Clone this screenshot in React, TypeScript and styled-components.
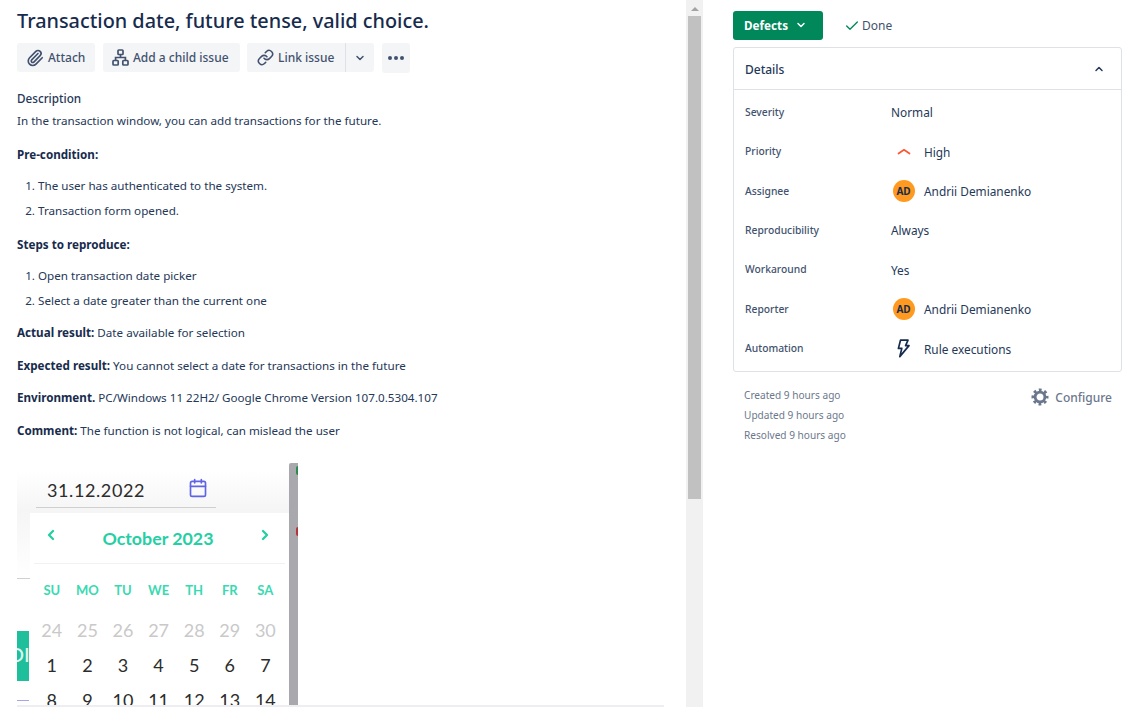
import styled, { createGlobalStyle } from "styled-components";
import { Calendar, Check, ChevronDown, ChevronLeft, ChevronRight, ChevronUp, Link, Paperclip } from "lucide-react";

const GlobalStyle = createGlobalStyle`
  html, body {
    margin: 0;
    padding: 0;
    background: #fff;
  }
  * {
    box-sizing: border-box;
  }
`;

const ink = "#172b4d";
const text = "#253858";
const muted = "#42526e";

const Page = styled.div`
  width: 1136px;
  height: 707px;
  display: flex;
  overflow: hidden;
  position: relative;
  font-family: "Noto Sans", "Open Sans", sans-serif;
  color: ${text};
`;

const Main = styled.main`
  width: 686px;
  height: 707px;
  overflow: hidden;
  padding: 8px 0 0 17px;
  flex-shrink: 0;
`;

const Title = styled.h1`
  margin: 0;
  font-size: 19.85px;
  line-height: 26px;
  font-weight: 500;
  color: ${ink};
`;

const Toolbar = styled.div`
  display: flex;
  align-items: flex-start;
  gap: 8px;
  margin-top: 9px;
`;

const ToolButton = styled.button<{ $width: number }>`
  width: ${(p) => p.$width}px;
  height: 29px;
  padding: 0 0 0 9px;
  border: 0;
  border-radius: 3px;
  background: #f4f5f7;
  display: flex;
  align-items: center;
  gap: 4px;
  font: 500 12px "Noto Sans", sans-serif;
  color: ${muted};
`;

const SplitButton = styled.div`
  display: flex;
  border-radius: 3px;
  overflow: hidden;
  background: #f4f5f7;
  margin-left: -1px;
`;

const SplitMain = styled(ToolButton)`
  border-right: 1px solid #dfe1e6;
  border-radius: 0;
  padding-left: 10px;
`;

const SplitArrow = styled.span`
  width: 28px;
  height: 29px;
  display: flex;
  align-items: center;
  justify-content: center;
  color: ${muted};
`;

const MoreButton = styled.span`
  width: 28px;
  height: 30px;
  border-radius: 3px;
  background: #f4f5f7;
  display: flex;
  align-items: center;
  justify-content: center;
  gap: 2px;
`;

const MoreDot = styled.i`
  width: 4px;
  height: 4px;
  border-radius: 50%;
  background: ${muted};
`;

const Heading = styled.div`
  margin-top: 15px;
  font-size: 11.7px;
  line-height: 20px;
  font-weight: 500;
  color: ${text};
`;

const Paragraph = styled.p`
  margin: 11.5px 0 0;
  font-size: 11.65px;
  line-height: 21px;
  color: ${text};

  strong {
    font-weight: 700;
    color: ${ink};
  }
`;

const Lead = styled(Paragraph)`
  margin-top: 2px;
`;

const ListTitle = styled(Paragraph)`
  margin-top: 12.7px;
`;

const Numbered = styled.ol`
  margin: 10.3px 0 0;
  padding: 0 0 0 21px;
  font-size: 11.65px;
  line-height: 21px;

  li + li {
    margin-top: 4px;
  }
`;

const Shot = styled.figure`
  position: relative;
  width: 281px;
  height: 244px;
  margin: 22px 0 0;
  overflow: hidden;
  font-family: Lato, "Noto Sans", sans-serif;
  background: linear-gradient(#ffffff 0, #ffffff 8px, #f5f5f5 48px, #ffffff 115px);
`;

const ShotRule = styled.div`
  position: absolute;
  left: 0;
  top: 115px;
  width: 14px;
  height: 1px;
  background: #d0d0d0;
`;

const ShotAction = styled.div`
  position: absolute;
  left: 0;
  top: 168px;
  width: 12px;
  height: 50px;
  background: #20bf9b;
  color: #dff6f0;
  font: 500 20px Lato, sans-serif;
  line-height: 46px;
  white-space: nowrap;
  overflow: hidden;
  text-indent: -9px;
`;

const ShotUnderline = styled.div`
  position: absolute;
  left: 0;
  top: 237px;
  width: 12px;
  height: 1px;
  background: #a4a6e6;
`;

const ShotSidebar = styled.div`
  position: absolute;
  right: 0;
  top: 0;
  bottom: 0;
  width: 9px;
  border-top-left-radius: 2px;
  background: #a9a9ad;
`;

const ShotDot = styled.span<{ $top: number; $color: string }>`
  position: absolute;
  left: 279px;
  top: ${(p) => p.$top}px;
  width: 4px;
  height: 9px;
  border-radius: 4px;
  background: ${(p) => p.$color};
`;

const DateField = styled.div`
  position: absolute;
  left: 19px;
  top: 11px;
  width: 180px;
  height: 34px;
  padding: 0 0 1px 11px;
  border-bottom: 1px solid #cfcfcf;
  display: flex;
  align-items: center;
  justify-content: space-between;
  font-size: 18px;
  letter-spacing: 0.6px;
  color: #2c2c2c;

  svg {
    margin-right: 8px;
    margin-top: -4px;
  }
`;

const Popup = styled.div`
  position: absolute;
  left: 13px;
  top: 50px;
  width: 259px;
  height: 200px;
  background: #fff;
`;

const MonthBar = styled.div`
  height: 51px;
  margin: 0 4px;
  border-bottom: 1px solid #f1f1f1;
  padding: 0 12px 0 9px;
  display: flex;
  justify-content: space-between;
  color: #25cfa4;

  svg {
    margin-top: 14px;
  }
`;

const Month = styled.span`
  font-size: 17.8px;
  font-weight: 700;
  line-height: 50px;
`;

const DayGrid = styled.div`
  display: grid;
  grid-template-columns: repeat(7, 35.6px);
  padding: 16px 0 0 4px;
  text-align: center;
`;

const WeekDay = styled.span`
  font-size: 13px;
  font-weight: 700;
  line-height: 20px;
  margin-bottom: 13px;
  color: #3ad9b1;
`;

const Day = styled.span<{ $dim?: boolean }>`
  font-size: 18px;
  line-height: 35px;
  color: ${(p) => (p.$dim ? "#c9c9c9" : "#2c2c2c")};
`;

const ScrollTrack = styled.div`
  width: 17px;
  height: 707px;
  background: #f1f1f1;
  padding: 16px 2px 0;
  position: relative;
  flex-shrink: 0;
`;

const ScrollThumb = styled.div`
  height: 483px;
  background: #c1c1c1;
`;

const ScrollArrow = styled.span`
  position: absolute;
  left: 5px;
  top: 7px;
  border-left: 4px solid transparent;
  border-right: 4px solid transparent;
  border-bottom: 4px solid #a3a3a3;
`;

const BottomRule = styled.div`
  position: absolute;
  left: 17px;
  bottom: 0;
  width: 647px;
  height: 2px;
  background: #eeeef2;
`;

const Side = styled.aside`
  width: 433px;
  padding: 11px 0 0 30px;
  flex-shrink: 0;
`;

const StatusRow = styled.div`
  display: flex;
  align-items: center;
  height: 29px;
`;

const StatusButton = styled.button`
  width: 90px;
  height: 29px;
  padding: 0 0 2px 11px;
  border: 0;
  border-radius: 3px;
  background: #00875a;
  color: #fff;
  display: flex;
  align-items: center;
  gap: 7px;
  font: 700 11.7px "Noto Sans", sans-serif;
`;

const DoneFlag = styled.span`
  display: flex;
  align-items: center;
  gap: 2px;
  margin-left: 21px;
  font-size: 12px;
  color: ${muted};
`;

const Panel = styled.section`
  width: 389px;
  height: 325px;
  margin-top: 7px;
  border: 1px solid #dfe1e6;
  border-radius: 3px;
`;

const PanelHead = styled.header`
  height: 42px;
  padding: 1px 16px 0 11px;
  border-bottom: 1px solid #dfe1e6;
  display: flex;
  align-items: center;
  justify-content: space-between;
  font-size: 12px;
  font-weight: 500;
  color: ${text};
`;

const FieldList = styled.div`
  padding-top: 2.6px;
`;

const Field = styled.div`
  display: grid;
  grid-template-columns: 146px 1fr;
  height: 39.4px;
  padding-left: 11px;
  align-items: center;
`;

const FieldLabel = styled.span`
  font-size: 10.3px;
  font-weight: 500;
  margin-top: -1px;
  color: ${muted};
`;

const FieldValue = styled.span`
  display: flex;
  align-items: center;
  font-size: 11.85px;
  color: ${text};
`;

const ValueIcon = styled.span`
  width: 33px;
  display: flex;
  justify-content: center;
  padding-right: 8px;
`;

const Avatar = styled.span`
  width: 22px;
  height: 22px;
  border-radius: 50%;
  background: #ff991f;
  color: #172b4d;
  display: flex;
  align-items: center;
  justify-content: center;
  font-size: 10px;
  font-weight: 700;
`;

const Footer = styled.footer`
  display: flex;
  justify-content: space-between;
  padding: 13px 10px 0 11px;
  width: 389px;
`;

const Stamps = styled.div`
  font-size: 10.1px;
  line-height: 20px;
  color: #6b778c;
`;

const Configure = styled.span`
  display: flex;
  align-items: center;
  gap: 6px;
  margin-top: 2px;
  height: 20px;
  font-size: 12px;
  font-weight: 500;
  color: #6b778c;
`;

const priorityIcon = (
  <svg width="14" height="8" viewBox="0 0 14 8" fill="none">
    <path d="M1.5 5.5 L7 1.8 L12.5 5.5" stroke="#ff5630" strokeWidth="1.7" strokeLinecap="round" strokeLinejoin="round" />
  </svg>
);

const ChildIssueIcon = () => (
  <svg width="17" height="17" viewBox="0 0 17 17" fill="none" stroke="currentColor" strokeWidth="1.7">
    <rect x="6" y="1" width="5" height="4.5" rx="0.8" />
    <rect x="1" y="11.5" width="5.2" height="4.5" rx="0.8" />
    <rect x="10.8" y="11.5" width="5.2" height="4.5" rx="0.8" />
    <path d="M8.5 5.5 V8.5 M3.6 11.5 V8.5 H13.4 V11.5" />
  </svg>
);

const BoltIcon = () => (
  <svg width="13" height="19" viewBox="0 0 13 19" fill="none" stroke={ink} strokeWidth="1.7" strokeLinejoin="round">
    <path d="M3.5 1.2 H11 L8.6 6.6 H12 L2.8 17.6 L4.8 9.4 H1.4 Z" />
  </svg>
);

const GearIcon = () => (
  <svg width="18" height="18" viewBox="0 0 18 18" fill="none" stroke="currentColor">
    <circle cx="9" cy="9" r="4.9" strokeWidth="2.8" />
    <circle cx="9" cy="9" r="7" strokeWidth="3" strokeDasharray="2.75 2.75" strokeDashoffset="1.37" />
  </svg>
);

const weekDays = ["SU", "MO", "TU", "WE", "TH", "FR", "SA"];
const lastMonth = [24, 25, 26, 27, 28, 29, 30];
const thisMonth = [1, 2, 3, 4, 5, 6, 7, 8, 9, 10, 11, 12, 13, 14];

const App = () => {
  return (
    <>
      <GlobalStyle />
      <Page>
        <Main>
          <Title>Transaction date, future tense, valid choice.</Title>
          <Toolbar>
            <ToolButton $width={78}>
              <Paperclip size={18} strokeWidth={2.2} />
              Attach
            </ToolButton>
            <ToolButton $width={137}>
              <ChildIssueIcon />
              Add a child issue
            </ToolButton>
            <SplitButton>
              <SplitMain $width={99}>
                <Link size={17} strokeWidth={2.2} />
                Link issue
              </SplitMain>
              <SplitArrow>
                <ChevronDown size={12} strokeWidth={3} />
              </SplitArrow>
            </SplitButton>
            <MoreButton>
              <MoreDot />
              <MoreDot />
              <MoreDot />
            </MoreButton>
          </Toolbar>
          <Heading>Description</Heading>
          <Lead>In the transaction window, you can add transactions for the future.</Lead>
          <ListTitle>
            <strong>Pre-condition:</strong>
          </ListTitle>
          <Numbered>
            <li>The user has authenticated to the system.</li>
            <li>Transaction form opened.</li>
          </Numbered>
          <ListTitle>
            <strong>Steps to reproduce:</strong>
          </ListTitle>
          <Numbered>
            <li>Open transaction date picker</li>
            <li>Select a date greater than the current one</li>
          </Numbered>
          <Paragraph>
            <strong>Actual result:</strong> Date available for selection
          </Paragraph>
          <Paragraph>
            <strong>Expected result:</strong> You cannot select a date for transactions in the future
          </Paragraph>
          <Paragraph>
            <strong>Environment.</strong> PC/Windows 11 22H2/ Google Chrome Version 107.0.5304.107
          </Paragraph>
          <Paragraph>
            <strong>Comment:</strong> The function is not logical, can mislead the user
          </Paragraph>
          <Shot>
            <ShotRule />
            <ShotAction>OI</ShotAction>
            <ShotUnderline />
            <ShotSidebar />
            <ShotDot $top={3} $color="#2d8a4e" />
            <ShotDot $top={64} $color="#b5343a" />
            <DateField>
              31.12.2022
              <Calendar size={20} color="#5f63e6" strokeWidth={2} />
            </DateField>
            <Popup>
              <MonthBar>
                <ChevronLeft size={16} strokeWidth={3.5} />
                <Month>October 2023</Month>
                <ChevronRight size={16} strokeWidth={3.5} />
              </MonthBar>
              <DayGrid>
                {weekDays.map((d) => (
                  <WeekDay key={d}>{d}</WeekDay>
                ))}
                {lastMonth.map((d) => (
                  <Day key={`p${d}`} $dim>
                    {d}
                  </Day>
                ))}
                {thisMonth.map((d) => (
                  <Day key={d}>{d}</Day>
                ))}
              </DayGrid>
            </Popup>
          </Shot>
        </Main>
        <ScrollTrack>
          <ScrollArrow />
          <ScrollThumb />
        </ScrollTrack>
        <Side>
          <StatusRow>
            <StatusButton>
              Defects
              <ChevronDown size={12} strokeWidth={3} />
            </StatusButton>
            <DoneFlag>
              <Check size={16} color="#00875a" strokeWidth={2} />
              Done
            </DoneFlag>
          </StatusRow>
          <Panel>
            <PanelHead>
              Details
              <ChevronUp size={12} strokeWidth={3} />
            </PanelHead>
            <FieldList>
              <Field>
                <FieldLabel>Severity</FieldLabel>
                <FieldValue>Normal</FieldValue>
              </Field>
              <Field>
                <FieldLabel>Priority</FieldLabel>
                <FieldValue>
                  <ValueIcon>{priorityIcon}</ValueIcon>
                  High
                </FieldValue>
              </Field>
              <Field>
                <FieldLabel>Assignee</FieldLabel>
                <FieldValue>
                  <ValueIcon>
                    <Avatar>AD</Avatar>
                  </ValueIcon>
                  Andrii Demianenko
                </FieldValue>
              </Field>
              <Field>
                <FieldLabel>Reproducibility</FieldLabel>
                <FieldValue>Always</FieldValue>
              </Field>
              <Field>
                <FieldLabel>Workaround</FieldLabel>
                <FieldValue>Yes</FieldValue>
              </Field>
              <Field>
                <FieldLabel>Reporter</FieldLabel>
                <FieldValue>
                  <ValueIcon>
                    <Avatar>AD</Avatar>
                  </ValueIcon>
                  Andrii Demianenko
                </FieldValue>
              </Field>
              <Field>
                <FieldLabel>Automation</FieldLabel>
                <FieldValue>
                  <ValueIcon>
                    <BoltIcon />
                  </ValueIcon>
                  Rule executions
                </FieldValue>
              </Field>
            </FieldList>
          </Panel>
          <Footer>
            <Stamps>
              <div>Created 9 hours ago</div>
              <div>Updated 9 hours ago</div>
              <div>Resolved 9 hours ago</div>
            </Stamps>
            <Configure>
              <GearIcon />
              Configure
            </Configure>
          </Footer>
        </Side>
        <BottomRule />
      </Page>
    </>
  );
};

export default App;
